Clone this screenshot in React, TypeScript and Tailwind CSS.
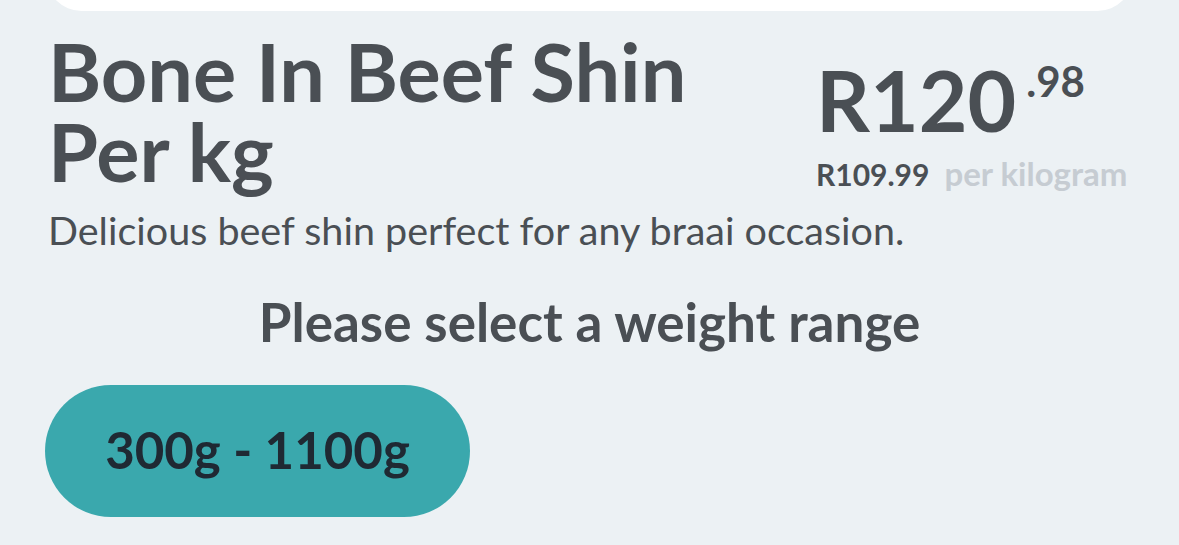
export default function App() {
  return (
    <div className="w-full h-[545px] overflow-hidden bg-[#ecf1f4] text-[#4a4f54]" style={{ fontFamily: "Lato, 'Noto Sans', sans-serif" }}>
      <div className="mx-[46px] -mt-[60px] h-[71px] rounded-[40px] bg-white" />
      <div className="px-[48px]">
        <div className="flex items-start justify-between">
          <h1 className="w-[700px] pt-[20px] text-[81px] font-bold leading-[80px]">
            Bone In Beef Shin Per kg
          </h1>
          <div className="flex w-[315px] flex-col pt-[51px]">
            <div className="flex items-start">
              <span className="text-[84px] font-bold leading-[76px]">R120</span>
              <span className="ml-[10px] mt-[-2px] text-[42px] font-bold leading-[42px]">.98</span>
            </div>
            <div className="mt-[11px] flex items-baseline gap-[15px] whitespace-nowrap">
              <span className="text-[30px] font-bold">R109.99</span>
              <span className="text-[33px] font-bold text-[#c6ccd2]">per kilogram</span>
            </div>
          </div>
        </div>
        <p className="mt-[8px] text-[39.5px] leading-[46px]">
          Delicious beef shin perfect for any braai occasion.
        </p>
        <h2 className="mt-[39px] text-center text-[53px] font-bold leading-[60px]">
          Please select a weight range
        </h2>
        <button className="mt-[33px] -ml-[3px] flex h-[132px] w-[425px] items-center justify-center rounded-full bg-[#3aa8ad] text-[51px] font-bold text-[#1f2933]">
          300g - 1100g
        </button>
      </div>
    </div>
  );
}
